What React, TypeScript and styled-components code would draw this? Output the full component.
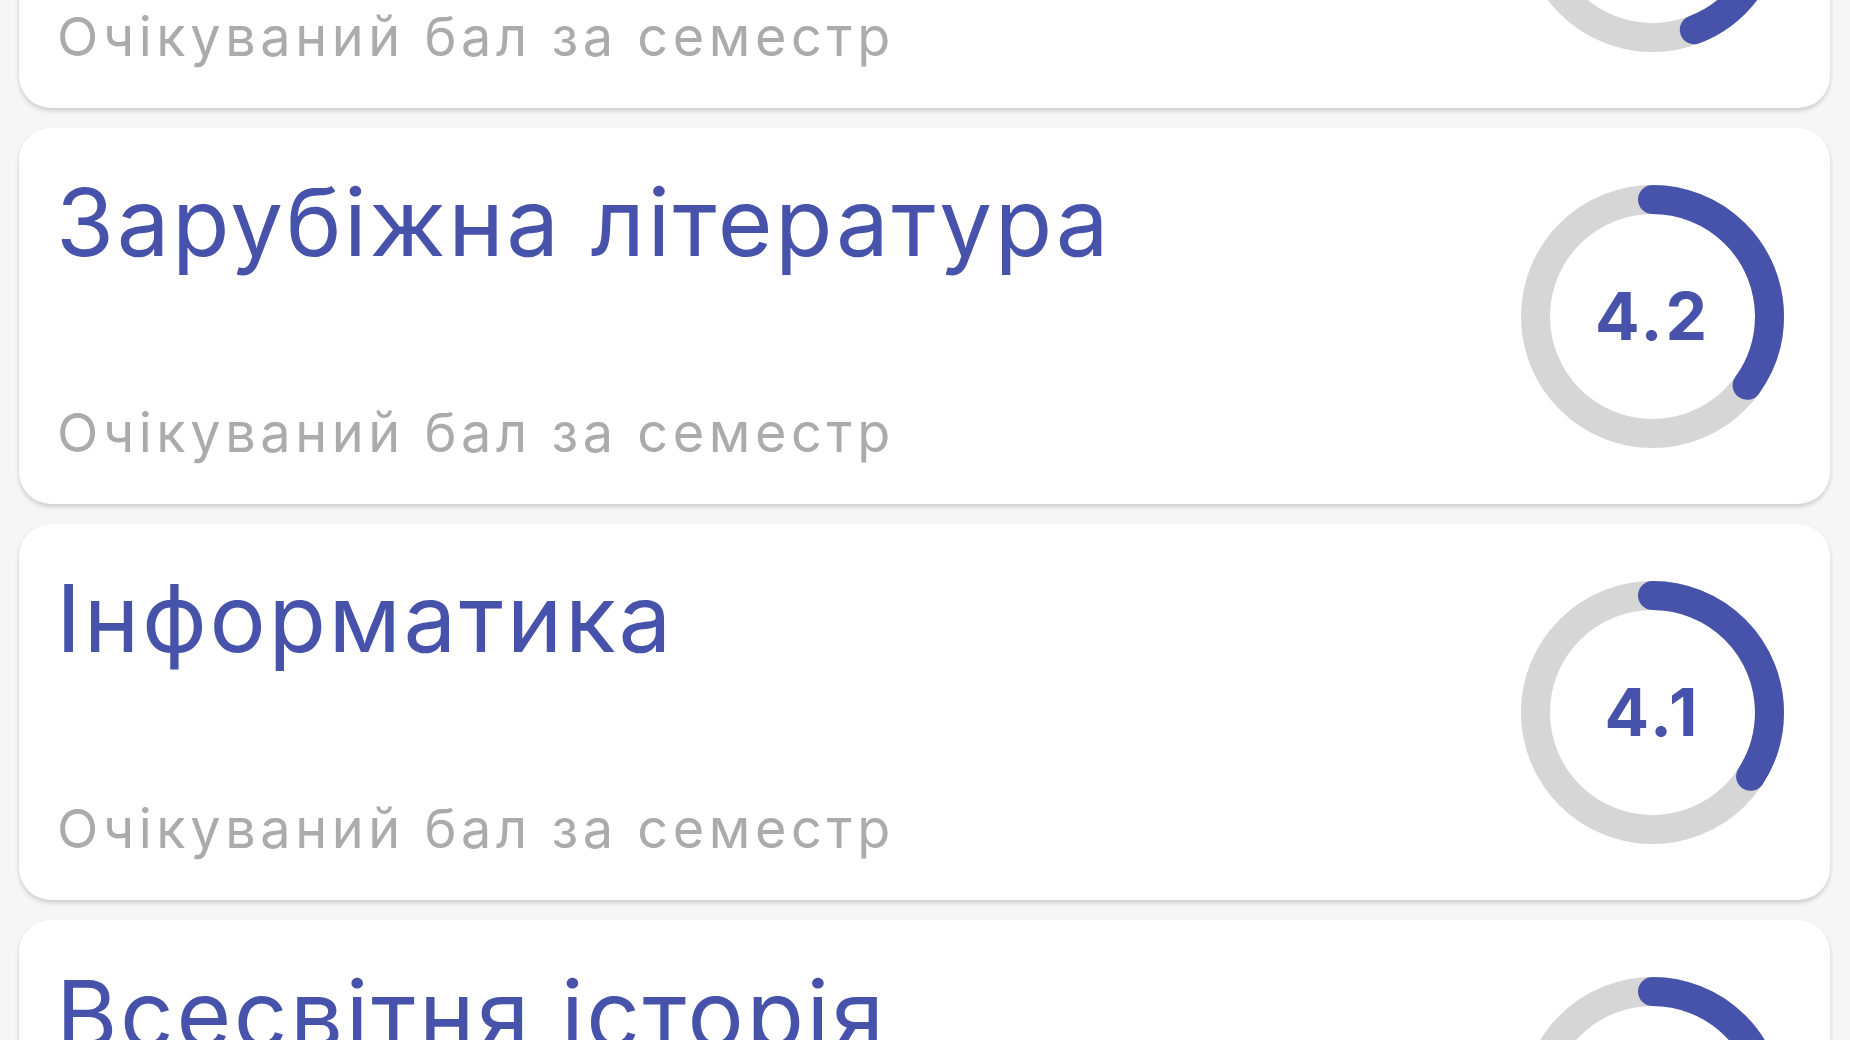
import React, { FC } from 'react';
import styled, { createGlobalStyle } from 'styled-components';

const GlobalStyle = createGlobalStyle`
  html, body {
    margin: 0;
    padding: 0;
    background: #f6f6f6;
    overflow: hidden;
  }
  body {
    font-family: Inter, Roboto, "Noto Sans", sans-serif;
  }
`;

const MAX_GRADE = 12;

const Screen = styled.div`
  width: 1850px;
  height: 1040px;
  overflow: hidden;
  background: #f6f6f6;
`;

// the list is scrolled, so the first card starts above the viewport
const List = styled.div`
  display: flex;
  flex-direction: column;
  gap: 20px;
  padding: 0 20px 0 19px;
  margin-top: -268px;
`;

const Card = styled.div`
  display: flex;
  align-items: center;
  justify-content: space-between;
  height: 376px;
  box-sizing: border-box;
  padding: 0 46px 0 37px;
  background: #ffffff;
  border-radius: 32px;
  box-shadow: 0 3px 4px rgba(0, 0, 0, 0.16), 0 0 2px rgba(0, 0, 0, 0.04);
`;

const Info = styled.div`
  display: flex;
  flex-direction: column;
  justify-content: space-between;
  align-self: stretch;
  padding: 47px 0 44px;
`;

const Title = styled.span`
  font-size: 94px;
  line-height: 1;
  font-weight: 400;
  letter-spacing: 2.6px;
  color: #4753ab;
  white-space: nowrap;
`;

const SubTitle = styled.span`
  font-size: 54px;
  line-height: 1;
  letter-spacing: 0.085em;
  color: #ababab;
  white-space: nowrap;
  margin-left: 1px;
`;

const RingBox = styled.div`
  position: relative;
  width: 263px;
  height: 263px;
  flex-shrink: 0;

  svg {
    display: block;
  }
`;

const Grade = styled.span`
  position: absolute;
  inset: 0;
  display: flex;
  align-items: center;
  justify-content: center;
  font-size: 66px;
  font-weight: 700;
  letter-spacing: 3px;
  color: #4753ab;
`;

interface IRingProps {
  value: number;
}

const Ring: FC<IRingProps> = ({ value }) => {
  const r = 117;
  const length = 2 * Math.PI * r;
  const filled = (value / MAX_GRADE) * length;

  return (
    <RingBox>
      <svg width="263" height="263" viewBox="0 0 263 263">
        <circle cx="131.5" cy="131.5" r={r} fill="none" stroke="#d6d6d6" strokeWidth="29" />
        <circle
          cx="131.5"
          cy="131.5"
          r={r}
          fill="none"
          stroke="#4753ab"
          strokeWidth="29"
          strokeLinecap="round"
          strokeDasharray={`${filled} ${length}`}
          transform="rotate(-90 131.5 131.5)"
        />
      </svg>
      <Grade>{value.toFixed(1)}</Grade>
    </RingBox>
  );
};

interface ISubject {
  name: string;
  grade: number;
}

const subjects: ISubject[] = [
  { name: 'Українська мова', grade: 5.3 },
  { name: 'Зарубіжна література', grade: 4.2 },
  { name: 'Інформатика', grade: 4.1 },
  { name: 'Всесвітня історія', grade: 4.0 },
];

const SubjectCard: FC<ISubject> = ({ name, grade }) => (
  <Card>
    <Info>
      <Title>{name}</Title>
      <SubTitle>Очікуваний бал за семестр</SubTitle>
    </Info>
    <Ring value={grade} />
  </Card>
);

const App: FC = () => (
  <Screen>
    <GlobalStyle />
    <List>
      {subjects.map(s => (
        <SubjectCard key={s.name} {...s} />
      ))}
    </List>
  </Screen>
);

export default App;
